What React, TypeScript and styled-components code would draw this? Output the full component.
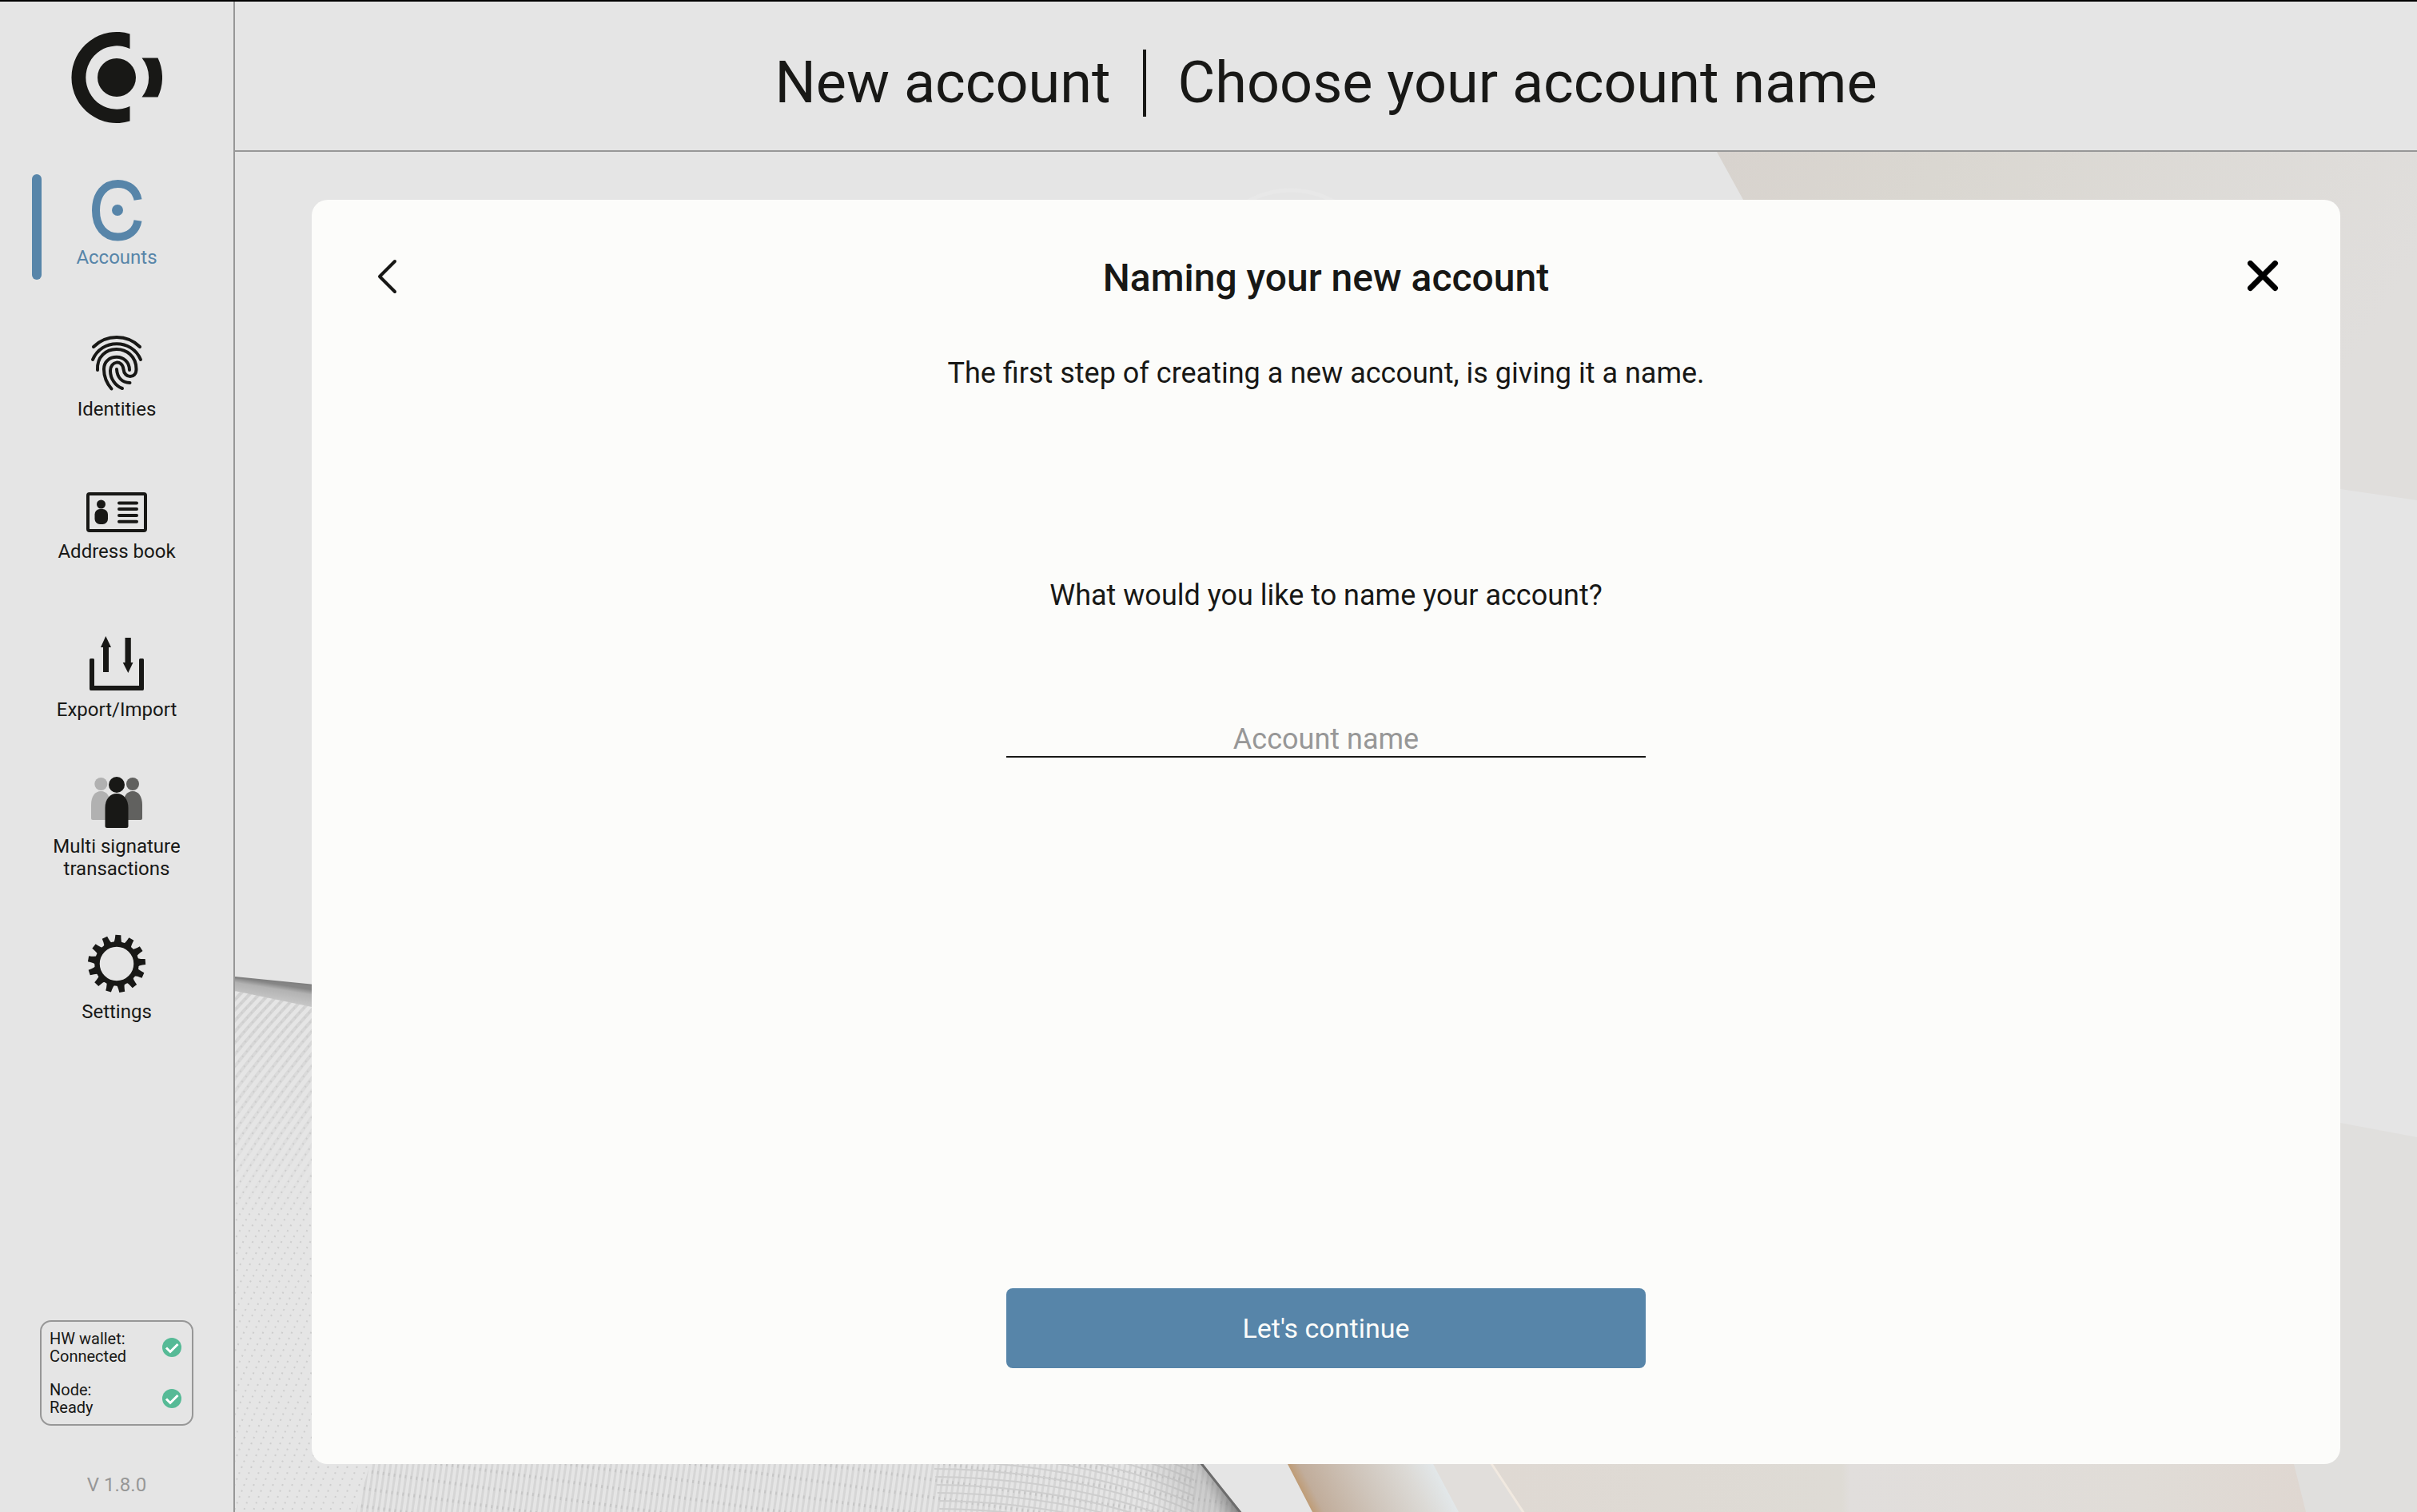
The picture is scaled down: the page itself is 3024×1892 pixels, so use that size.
import React, { useState } from 'react';
import styled, { createGlobalStyle } from 'styled-components';

const color = {
  ink: '#181816',
  line: '#979797',
  page: '#e5e5e5',
  card: '#fcfcfa',
  accent: '#5785a9',
  ok: '#56ba96',
};

const GlobalStyle = createGlobalStyle`
  *, *::before, *::after { box-sizing: border-box; }
  body {
    margin: 0;
    background: ${color.page};
    color: ${color.ink};
    font-family: Roboto, "Liberation Sans", sans-serif;
  }
  button, input { font: inherit; color: inherit; }
`;

const Shell = styled.div`
  display: flex;
  min-height: 100vh;
  border-top: 2px solid #000;
  background: ${color.page};
`;

const Sidebar = styled.aside`
  flex: 0 0 294px;
  display: flex;
  flex-direction: column;
  align-items: center;
  padding: 38px 0 20px;
  border-right: 2px solid ${color.line};
`;

const Nav = styled.nav`
  align-self: stretch;
  display: flex;
  flex-direction: column;
  gap: 46px;
  margin-top: 64px;
`;

const NavLink = styled.a<{ $active?: boolean }>`
  position: relative;
  display: flex;
  flex-direction: column;
  align-items: center;
  gap: 4px;
  padding: 6px 56px 14px;
  color: ${(p) => (p.$active ? color.accent : color.ink)};
  font-size: 24px;
  line-height: 28px;
  text-align: center;
  text-decoration: none;

  &::before {
    content: '';
    display: ${(p) => (p.$active ? 'block' : 'none')};
    position: absolute;
    top: 0;
    bottom: 0;
    left: 40px;
    width: 12px;
    border-radius: 6px;
    background: ${color.accent};
  }
`;

const StatusBox = styled.section`
  display: flex;
  flex-direction: column;
  gap: 20px;
  width: 192px;
  margin-top: auto;
  padding: 10px 13px 10px 10px;
  border: 2px solid ${color.line};
  border-radius: 14px;
`;

const StatusRow = styled.div`
  display: flex;
  align-items: center;
  justify-content: space-between;
  font-size: 20px;
  line-height: 22px;
`;

const Version = styled.p`
  margin: 60px 0 0;
  color: ${color.line};
  font-size: 24px;
  line-height: 28px;
`;

const Main = styled.main`
  flex: 1;
  min-width: 0;
  display: flex;
  flex-direction: column;
`;

const Header = styled.header`
  display: flex;
  justify-content: center;
  padding: 60px 40px 42px;
  border-bottom: 2px solid ${color.line};
`;

const Heading = styled.h1`
  display: flex;
  margin: 0;
  font-size: 72px;
  font-weight: 400;
  line-height: 84px;
`;

const HeadingPart = styled.span`
  padding: 0 40px;
  & + & { border-left: 4px solid ${color.ink}; }
`;

const Stage = styled.div`
  position: relative;
  flex: 1;
  display: flex;
  padding: 60px 96px;
  overflow: hidden;
`;

const Backdrop = styled.svg`
  position: absolute;
  inset: 0;
  width: 100%;
  height: 100%;
`;

const Card = styled.form`
  position: relative;
  flex: 1;
  display: flex;
  flex-direction: column;
  align-items: center;
  padding: 66px 72px 120px;
  border-radius: 20px;
  background: ${color.card};
`;

const CardTop = styled.div`
  align-self: stretch;
  display: flex;
  align-items: flex-start;
  justify-content: space-between;
`;

const IconButton = styled.button`
  display: grid;
  place-items: center;
  width: 48px;
  height: 60px;
  padding: 0;
  border: 0;
  background: none;
  cursor: pointer;
`;

const CardTitle = styled.h2`
  margin: 0;
  font-size: 48px;
  font-weight: 500;
  line-height: 64px;
`;

const Lead = styled.p`
  margin: 66px 0 0;
  font-size: 36px;
  line-height: 42px;
`;

const Question = styled.label`
  margin-top: 236px;
  font-size: 36px;
  line-height: 42px;
`;

const NameInput = styled.input`
  width: 800px;
  max-width: 100%;
  height: 44px;
  margin-top: 138px;
  padding: 0;
  border: 0;
  border-bottom: 2px solid ${color.ink};
  border-radius: 0;
  outline: 0;
  background: none;
  font-size: 36px;
  text-align: center;
  &::placeholder { color: ${color.line}; opacity: 1; }
`;

const Submit = styled.button`
  width: 800px;
  max-width: 100%;
  height: 100px;
  margin-top: auto;
  border: 0;
  border-radius: 8px;
  background: ${color.accent};
  color: ${color.card};
  font-size: 34px;
  cursor: pointer;
`;

const Logo = () => (
  <svg width="114" height="114" viewBox="-57 -57 114 114" fill={color.ink} role="img" aria-label="Concordium">
    <path d="M16.500-54.500A56.500 57 0 1 0 16.500 54.500V36A38.800 39.700 0 1 1 16.500-36Z" />
    <circle r="24" />
    <path d="M31.500-24.500H51.500A57 57 0 0 1 51.500 24.500H31.500A39 39 0 0 0 31.500-24.500Z" />
  </svg>
);

const AccountsIcon = () => (
  <svg width="64" height="80" viewBox="114 224 64 80" aria-hidden="true">
    <path
      d="M172.500 250C170.500 238 161 230 147.500 230C131 230 120 243 120 263.200C120 283.500 131 296.500 147.500 296.500C161 296.500 170.500 288.500 172.500 276"
      fill="none"
      stroke="currentColor"
      strokeWidth="10"
    />
    <circle cx="147" cy="263" r="7" fill="currentColor" />
  </svg>
);

const IdentitiesIcon = () => (
  <svg width="68" height="92" viewBox="112 402 68 92" aria-hidden="true">
    <g fill="none" stroke="currentColor" strokeWidth="4" strokeLinecap="round">
      <path d="M117 434C133 418 159 418 175 434" />
      <path d="M116 450C127 423.500 165 423.500 176 450" />
      <path d="M122 463C120 428.500 170.500 428.500 170.500 462C170.500 474 155.500 474 154.500 462C153 449.500 138 451.500 138 464C138 474 144.500 483 153 486" />
      <path d="M139.500 486.500C133 479 130 471.500 130 462C130 441.500 162 441.500 162 463" />
      <path d="M146 462C146.500 472 152.500 479 162.500 479" />
    </g>
  </svg>
);

const AddressBookIcon = () => (
  <svg width="76" height="80" viewBox="108 592 76 80" aria-hidden="true">
    <rect x="110" y="618" width="72" height="46" rx="2" fill="none" stroke="currentColor" strokeWidth="4" />
    <circle cx="126.500" cy="631" r="5.500" fill="currentColor" />
    <rect x="118.500" y="637" width="16.500" height="19" rx="6.500" fill="currentColor" />
    <path d="M149 629.500H171M149 637H171M149 645H171M149 652.700H171" stroke="currentColor" strokeWidth="4" strokeLinecap="round" />
  </svg>
);

const ExportIcon = () => (
  <svg width="68" height="100" viewBox="112 770 68 100" fill="currentColor" aria-hidden="true">
    <path d="M113.500 824H116.500Q118 824 118 825.500V858H174V825.500Q174 824 175.500 824H178.500Q180 824 180 825.500V862Q180 864 178.500 864H113.500Q112 864 112 862V825.500Q112 824 113.500 824Z" />
    <path d="M129 841V810H126L132.300 796L139 810H136V841Z" />
    <path d="M156.500 798H163.800V829H166.500L160.300 842L153.700 829H156.500Z" />
  </svg>
);

const MultiSignatureIcon = () => (
  <svg width="64" height="73" viewBox="114 968 64 73" aria-hidden="true">
    <g fill="#b1b1b1">
      <circle cx="126.300" cy="981" r="8" />
      <path d="M114 1007C114 996.500 119 990 126.300 990S138 996.500 138 1007V1026H116Q114 1026 114 1024Z" />
    </g>
    <g fill="#61615f">
      <circle cx="166" cy="981" r="8" />
      <path d="M154 1007C154 996.500 159 990 166 990S178 996.500 178 1007V1024Q178 1026 176 1026H154Z" />
    </g>
    <circle cx="146" cy="982" r="10" fill={color.ink} />
    <path d="M131.500 1011C131.500 1000 137.500 993 146 993S160.500 1000 160.500 1011V1033.500Q160.500 1036 158 1036H134Q131.500 1036 131.500 1033.500Z" fill={color.ink} />
  </svg>
);

const toothAngles = Array.from({ length: 13 }, (_, i) => 3 + (i * 360) / 13);

const SettingsIcon = () => (
  <svg width="74" height="81" viewBox="-37 -39 74 81" aria-hidden="true">
    <circle r="24.500" fill="none" stroke="currentColor" strokeWidth="6.500" />
    {toothAngles.map((angle) => (
      <path key={angle} d="M-6-25Q-3.800-27-3.500-36H3.500Q3.800-27 6-25Z" fill="currentColor" transform={`rotate(${angle})`} />
    ))}
  </svg>
);

const CheckIcon = () => (
  <svg width="24" height="24" viewBox="0 0 24 24" aria-hidden="true">
    <circle cx="12" cy="12" r="12" fill={color.ok} />
    <path d="M5 12.500L10 17.500L19.500 8" fill="none" stroke="#fff" strokeWidth="3" />
  </svg>
);

const BackIcon = () => (
  <svg width="28" height="44" viewBox="0 0 28 44" aria-hidden="true">
    <path d="M22 3L3 22L22 41" fill="none" stroke={color.ink} strokeWidth="4" strokeLinecap="round" strokeLinejoin="round" />
  </svg>
);

const CloseIcon = () => (
  <svg width="40" height="40" viewBox="0 0 40 40" aria-hidden="true">
    <path d="M3.500 3.500L34.500 34.500M34.500 3.500L3.500 34.500" stroke="#000" strokeWidth="7" strokeLinecap="round" />
  </svg>
);

/* Each strand leans at 45° near the rim and straightens as it runs down the sheet. */
const strandPath = (start: number) => {
  const points: string[] = [];
  for (let y = 1036; y <= 1716; y += 20) {
    const slope = 1 + (1.6 * (y - 1036)) / 666;
    const x = start - (666 / 1.6) * Math.log(slope);
    points.push(`${x.toFixed(1)} ${y}`);
  }
  return `M${points.join('L')}`;
};

const strands = Array.from({ length: 48 }, (_, i) => strandPath(12 + i * 12));
const ripples = Array.from({ length: 14 }, (_, i) => 1562 + i * 10);

/* Decorative paper-and-mesh artwork behind the card. */
const Artwork = () => (
  <Backdrop viewBox="0 0 2730 1702" preserveAspectRatio="xMidYMid slice" aria-hidden="true">
    <defs>
      <linearGradient id="paper" x1="0" y1="0" x2="1" y2="0.300">
        <stop offset="0" stopColor="#d8d3ce" />
        <stop offset="0.300" stopColor="#dad7d1" />
        <stop offset="1" stopColor="#e0dedc" />
      </linearGradient>
      <linearGradient id="fold" gradientUnits="userSpaceOnUse" x1="1317" y1="1642" x2="1461" y2="1568">
        <stop offset="0" stopColor="#bf9c76" />
        <stop offset="0.080" stopColor="#c1ad9b" />
        <stop offset="0.450" stopColor="#cfc5bb" />
        <stop offset="0.800" stopColor="#dcdad6" />
        <stop offset="1" stopColor="#e2e7e9" />
      </linearGradient>
      <linearGradient id="sheet" gradientUnits="userSpaceOnUse" x1="1573" y1="0" x2="2591" y2="0">
        <stop offset="0" stopColor="#dfd9d3" />
        <stop offset="0.430" stopColor="#dedbd5" />
        <stop offset="0.440" stopColor="#e1dedc" />
        <stop offset="0.800" stopColor="#e0dcd7" />
        <stop offset="1" stopColor="#dfd7d1" />
      </linearGradient>
      <linearGradient id="rim" gradientUnits="userSpaceOnUse" x1="0" y1="1033" x2="-4" y2="1058">
        <stop offset="0" stopColor="#858585" />
        <stop offset="0.250" stopColor="#b2b2b2" />
        <stop offset="1" stopColor="#cdcdcd" />
      </linearGradient>
      <linearGradient id="shade" gradientUnits="userSpaceOnUse" x1="1150" y1="1700" x2="1234" y2="1660">
        <stop offset="0" stopColor="#999" stopOpacity="0" />
        <stop offset="0.750" stopColor="#999" stopOpacity="0.350" />
        <stop offset="1" stopColor="#666" stopOpacity="0.700" />
      </linearGradient>
      <linearGradient id="fadeDown" x1="0" y1="0" x2="0" y2="1">
        <stop offset="0" stopColor="#fff" />
        <stop offset="0.300" stopColor="#999" />
        <stop offset="1" stopColor="#000" />
      </linearGradient>
      <mask id="strandMask">
        <rect x="0" y="1030" width="110" height="300" fill="url(#fadeDown)" />
      </mask>
      <clipPath id="weave">
        <path d="M0 1048L96 1068L169 1642L151 1702H0Z" />
      </clipPath>
      <pattern id="mesh" width="7" height="22" patternUnits="userSpaceOnUse" patternTransform="rotate(8)">
        <rect width="3" height="22" fill="#d6d6d6" />
        <rect y="4" width="2" height="4" fill="#c6c6c6" />
      </pattern>
    </defs>

    <circle cx="1321" cy="158" r="110" fill="none" stroke="#e8e8e8" strokeWidth="5" />

    <path d="M1854 0L1887 60L2100 330L2634 422L2730 436V0Z" fill="url(#paper)" />

    <path d="M2500 1194L2634 1215L2730 1233V1702H2450Z" fill="#e0dfdd" />
    <path d="M1573 1642L1612 1702H2591L2576 1642L2400 1300H1500Z" fill="url(#sheet)" />
    <path d="M1480 1600H1545L1612 1702H1500Z" fill="#e1dedb" />
    <path d="M1571 1640L1613 1704" stroke="#f1e9e0" strokeWidth="3" />
    <path d="M1317 1642L1348 1702H1531L1499 1642L1478 1602H1296Z" fill="url(#fold)" />

    <g clipPath="url(#weave)" fill="none">
      <g stroke="#cfcfcf" strokeWidth="4" mask="url(#strandMask)">
        {strands.map((d) => (
          <path key={d} d={d} />
        ))}
      </g>
      <g stroke="#cdcdcd" strokeWidth="2" strokeDasharray="2 6">
        {strands.map((d) => (
          <path key={d} d={d} />
        ))}
      </g>
    </g>
    <path d="M0 1033L110 1044V1073L96 1070L0 1050Z" fill="url(#rim)" />
    <path d="M0 1033L110 1044" stroke="#808080" strokeWidth="2" />

    <path d="M169 1642L151 1702H1259L1210 1642L1100 1500H220Z" fill="url(#mesh)" />
    <g fill="none" stroke="#cecece" strokeWidth="2">
      {ripples.map((y) => (
        <path key={y} d={`M${865 + (y - 1562) / 8} ${y + 6}Q${1060} ${y + 8} ${1200} ${y + 70}`} />
      ))}
    </g>
    <path d="M1100 1642H1210L1259 1702H1130Z" fill="url(#shade)" />
    <path d="M1208 1640L1259 1704" fill="none" stroke="#6c6c6c" strokeWidth="3" />
  </Backdrop>
);

const navItems = [
  { label: 'Accounts', Icon: AccountsIcon, active: true },
  { label: 'Identities', Icon: IdentitiesIcon },
  { label: 'Address book', Icon: AddressBookIcon },
  { label: 'Export/Import', Icon: ExportIcon },
  { label: 'Multi signature transactions', Icon: MultiSignatureIcon },
  { label: 'Settings', Icon: SettingsIcon },
];

const statuses = [
  { name: 'HW wallet:', value: 'Connected' },
  { name: 'Node:', value: 'Ready' },
];

export default function App() {
  const [name, setName] = useState('');

  return (
    <>
      <GlobalStyle />
      <Shell>
        <Sidebar>
          <Logo />
          <Nav>
            {navItems.map(({ label, Icon, active }) => (
              <NavLink key={label} href="#" $active={active} aria-current={active ? 'page' : undefined}>
                <Icon />
                {label}
              </NavLink>
            ))}
          </Nav>
          <StatusBox>
            {statuses.map((status) => (
              <StatusRow key={status.name}>
                <span>
                  {status.name}
                  <br />
                  {status.value}
                </span>
                <CheckIcon />
              </StatusRow>
            ))}
          </StatusBox>
          <Version>V 1.8.0</Version>
        </Sidebar>
        <Main>
          <Header>
            <Heading>
              <HeadingPart>New account</HeadingPart>
              <HeadingPart>Choose your account name</HeadingPart>
            </Heading>
          </Header>
          <Stage>
            <Artwork />
            <Card onSubmit={(e) => e.preventDefault()}>
              <CardTop>
                <IconButton type="button" aria-label="Back">
                  <BackIcon />
                </IconButton>
                <CardTitle>Naming your new account</CardTitle>
                <IconButton type="button" aria-label="Close">
                  <CloseIcon />
                </IconButton>
              </CardTop>
              <Lead>The first step of creating a new account, is giving it a name.</Lead>
              <Question htmlFor="account-name">What would you like to name your account?</Question>
              <NameInput
                id="account-name"
                placeholder="Account name"
                value={name}
                onChange={(e) => setName(e.target.value)}
              />
              <Submit type="submit">Let's continue</Submit>
            </Card>
          </Stage>
        </Main>
      </Shell>
    </>
  );
}
